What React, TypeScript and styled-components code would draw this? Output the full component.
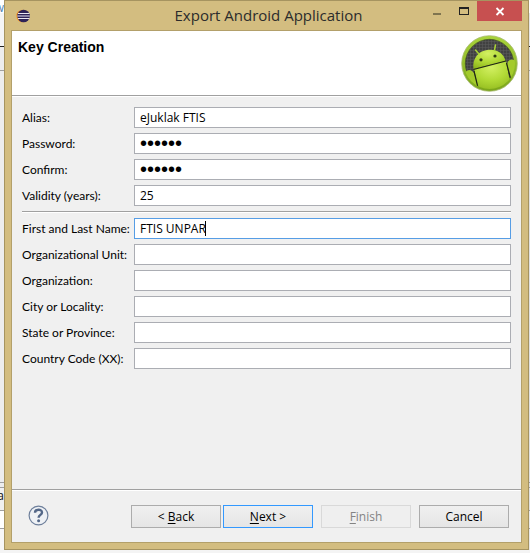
import React, { useState } from "react";
import styled, { createGlobalStyle } from "styled-components";

const Global = createGlobalStyle`
  *, *::before, *::after { box-sizing: border-box; }
  html, body, #root { height: 100%; }
  body { margin: 0; overflow: hidden; background: #ededed; font: 12px/16px "Open Sans", "Noto Sans", sans-serif; color: #000; }
  button, input { font: inherit; color: inherit; }
`;

const Desktop = styled.div`
  display: grid;
  grid-template-columns: 4px minmax(0, 1fr) 1px;
  grid-template-rows: minmax(0, 1fr) 3px;
  height: 100%;
`;

const Backdrop = styled.div`
  display: flex;
  flex-direction: column;
  overflow: hidden;
  background: #e9e9e9;
`;

const Strip = styled.div<{ $h?: number; $bg: string; $line?: string }>`
  flex: ${(p) => (p.$h ? `0 0 ${p.$h}px` : "1 1 0")};
  overflow: hidden;
  background: ${(p) => p.$bg};
  border-bottom: 1px solid ${(p) => p.$line ?? p.$bg};
`;

const Clipped = styled.span<{ $color: string }>`
  display: flex;
  justify-content: flex-end;
  color: ${(p) => p.$color};
`;

const BottomEdge = styled.div`
  grid-column: 1 / -1;
  background: #f4f4f4;
`;

const Frame = styled.section`
  display: flex;
  flex-direction: column;
  padding: 0 6px 6px;
  background: #d3bd80;
  border: 1px solid #a69460;
`;

const TitleBar = styled.header`
  display: grid;
  grid-template-columns: 112px 1fr 108px;
  flex: 0 0 29px;
  align-items: center;
`;

const AppIcon = styled.svg`
  margin-left: 5px;
  width: 14px;
  height: 14px;
`;

const Title = styled.h1`
  margin: 0;
  font-size: 15px;
  line-height: 29px;
  font-weight: 400;
  text-align: center;
  white-space: nowrap;
  color: #2c2c2c;
`;

const WindowControls = styled.div`
  display: flex;
  align-self: start;
  justify-content: flex-end;
`;

const ControlButton = styled.button<{ $close?: boolean }>`
  display: block;
  width: ${(p) => (p.$close ? 45 : 27)}px;
  height: 20px;
  padding: 0;
  border: 0;
  background: ${(p) => (p.$close ? "#c75050" : "transparent")};
  svg { display: block; width: 100%; height: 20px; }
`;

const Client = styled.form`
  display: flex;
  flex: 1;
  flex-direction: column;
  min-height: 0;
  background: #f0f0f0;
  border: 1px solid #b3a06a;
`;

const Banner = styled.div`
  display: flex;
  flex: 0 0 65px;
  justify-content: space-between;
  padding: 4px 3px 0 6px;
  background: #fff;
  border-bottom: 1px solid #a0a0a0;
`;

const Heading = styled.h2`
  margin: 4px 0 0;
  font: 700 14px/16px "Liberation Sans", Arial, sans-serif;
`;

const AndroidLogo = styled.svg`
  width: 57px;
  height: 57px;
`;

const Fields = styled.div`
  flex: 1;
  padding: 10px 10px 0;
  border-top: 1px solid #fff;
`;

const Group = styled.div`
  display: grid;
  grid-template-columns: 112px minmax(0, 1fr);
  row-gap: 5px;
  align-items: center;
`;

const Divider = styled.hr`
  height: 2px;
  margin: 5px 0;
  border: 0;
  border-top: 1px solid #a0a0a0;
  background: #fff;
`;

const Label = styled.label`
  font-family: Lato, "Open Sans", sans-serif;
  white-space: nowrap;
`;

const FieldBox = styled.div`
  position: relative;
`;

const TextField = styled.input`
  display: block;
  width: 100%;
  height: 21px;
  padding: 0 5px;
  border: 1px solid #abadb3;
  border-radius: 0;
  background: #fff;
  outline: none;
  caret-color: transparent;
  &:focus { border-color: #569de5; }
  &[type="password"] { font-family: "Liberation Sans", Arial, sans-serif; font-size: 20px; }
`;

const Caret = styled.div`
  position: absolute;
  top: 3px;
  left: 6px;
  height: 15px;
  border-right: 1px solid #000;
  pointer-events: none;
`;

const Footer = styled.footer`
  display: flex;
  flex: 0 0 53px;
  align-items: flex-start;
  padding: 15px 12px 0 16px;
  border-top: 1px solid #a0a0a0;
  box-shadow: inset 0 1px #fff;
`;

const HelpButton = styled.button`
  width: 21px;
  height: 21px;
  margin-right: auto;
  padding: 0;
  border: 0;
  background: none;
  svg { display: block; }
`;

const Pair = styled.div`
  display: flex;
  gap: 2px;
`;

const Actions = styled.div`
  display: flex;
  gap: 8px;
`;

const PushButton = styled.button<{ $primary?: boolean }>`
  width: 90px;
  height: 23px;
  padding: 0;
  border: 1px solid ${(p) => (p.$primary ? "#3399ff" : "#acacac")};
  background: linear-gradient(#f0f0f0, #e5e5e5);
  line-height: 20px;
  u { text-underline-offset: 2px; }
  &:disabled { border-color: #d9d9d9; background: #efefef; color: #838383; }
`;

type Field = { id: string; label: string; value?: string; type?: string; focus?: boolean };

const keyFields: Field[] = [
  { id: "alias", label: "Alias:", value: "eJuklak FTIS" },
  { id: "password", label: "Password:", value: "secret", type: "password" },
  { id: "confirm", label: "Confirm:", value: "secret", type: "password" },
  { id: "validity", label: "Validity (years):", value: "25" },
];

const ownerFields: Field[] = [
  { id: "name", label: "First and Last Name:", value: "FTIS UNPAR", focus: true },
  { id: "unit", label: "Organizational Unit:" },
  { id: "organization", label: "Organization:" },
  { id: "city", label: "City or Locality:" },
  { id: "state", label: "State or Province:" },
  { id: "country", label: "Country Code (XX):" },
];

function textWidth(text: string) {
  const ctx = document.createElement("canvas").getContext("2d");
  if (!ctx) return 0;
  ctx.font = '12px "Open Sans", "Noto Sans", sans-serif';
  return Math.round(ctx.measureText(text).width);
}

function FieldRow({ id, label, value = "", type = "text", focus }: Field) {
  const [text, setText] = useState(value);
  return (
    <>
      <Label htmlFor={id}>{label}</Label>
      <FieldBox>
        <TextField id={id} type={type} value={text} autoFocus={focus} autoComplete="off" spellCheck={false} onChange={(e) => setText(e.target.value)} />
        {focus && <Caret aria-hidden="true" style={{ width: textWidth(text) }} />}
      </FieldBox>
    </>
  );
}

function EclipseIcon() {
  return (
    <AppIcon viewBox="0 0 14 14" aria-hidden="true">
      <circle cx="6.5" cy="7" r="6.3" fill="#f39a2d" />
      <circle cx="7.6" cy="7" r="6.3" fill="#2e2358" />
      <path d="M2 4.500h11.5M1.3 7h12.500M2 9.500h11.5" stroke="#e8e6f2" strokeWidth="1" />
    </AppIcon>
  );
}

function Android() {
  return (
    <AndroidLogo viewBox="0 0 57 57" role="img" aria-label="Android">
      <defs>
        <linearGradient id="ring" x1="0" y1="0" x2="0" y2="1">
          <stop offset="0" stopColor="#a9d43b" />
          <stop offset="1" stopColor="#7ba51a" />
        </linearGradient>
        <radialGradient id="body" cx=".45" cy=".2" r=".85">
          <stop offset="0" stopColor="#d3f063" />
          <stop offset=".5" stopColor="#b2da36" />
          <stop offset="1" stopColor="#8cb41b" />
        </radialGradient>
        <pattern id="mesh" width="3" height="3" patternUnits="userSpaceOnUse">
          <rect width="3" height="3" fill="#414141" />
          <path d="M0 0h3M0 0v3" stroke="#5c5c5c" strokeWidth="1" />
        </pattern>
        <clipPath id="disc"><circle cx="28.5" cy="28.5" r="25.500" /></clipPath>
      </defs>
      <circle cx="28.5" cy="28.5" r="27.800" fill="url(#ring)" stroke="#a9ba75" strokeWidth=".8" />
      <circle cx="28.5" cy="28.5" r="24.2" fill="url(#mesh)" stroke="#3d4b1d" strokeWidth=".6" />
      <g clipPath="url(#disc)">
        <path d="M13 34L45 26L51 57H18Z" fill="url(#body)" />
        <path d="M3 39Q7 33 11 36L13 38L19 57H3Z" fill="#a4cb2c" />
        <path d="M46 29Q48 23 53 25L57 30V53H52Z" fill="#a4cb2c" />
        <path d="M12.5 34C11 23 18 16 26 15C35 13.500 43 18 44.500 26Z" fill="url(#body)" />
        <path d="M12.500 34.500L45 26M13 36L18 57M45.500 28L51 49" fill="none" stroke="#202713" strokeWidth="1.2" />
      </g>
      <path d="M14.500 15L18 19M34.500 10L33.500 15" stroke="#a9d335" strokeWidth="1.5" strokeLinecap="round" />
      <circle cx="20" cy="24.800" r="1.6" fill="#303b14" />
      <circle cx="34" cy="21" r="1.6" fill="#303b14" />
    </AndroidLogo>
  );
}

export default function App() {
  return (
    <Desktop>
      <Global />
      <Backdrop aria-hidden="true">
        <Strip $h={13} $bg="#fff"><Clipped $color="#5585b5">w</Clipped></Strip>
        <Strip $h={34} $bg="#f5f5f5" $line="#222" />
        <Strip $h={24} $bg="#ededed" $line="#a0a0a0" />
        <Strip $bg="#ededed" $line="#a0a0a0" />
        <Strip $h={5} $bg="#ededed" $line="#a0a0a0" />
        <Strip $h={23} $bg="#f0f0f0" $line="#a0a0a0"><Clipped $color="#111">a</Clipped></Strip>
        <Strip $h={18} $bg="#fff" $line="#a0a0a0" />
        <Strip $h={21} $bg="#f7f7f7" />
      </Backdrop>
      <Frame aria-label="Export Android Application">
        <TitleBar>
          <EclipseIcon />
          <Title>Export Android Application</Title>
          <WindowControls>
            <ControlButton type="button" aria-label="Minimize">
              <svg viewBox="0 0 27 20"><path d="M10 12h8v2h-8z" fill="#7f744f" /></svg>
            </ControlButton>
            <ControlButton type="button" aria-label="Maximize">
              <svg viewBox="0 0 27 20"><path d="M9 6h10v8H9zM10 8v5h8V8z" fill="#222" fillRule="evenodd" /></svg>
            </ControlButton>
            <ControlButton type="button" $close aria-label="Close">
              <svg viewBox="0 0 45 20"><path d="M19.500 7L26.500 14M26.500 7L19.500 14" stroke="#fff" strokeWidth="1.8" /></svg>
            </ControlButton>
          </WindowControls>
        </TitleBar>
        <Client onSubmit={(e) => e.preventDefault()}>
          <Banner>
            <Heading>Key Creation</Heading>
            <Android />
          </Banner>
          <Fields>
            <Group>{keyFields.map((f) => <FieldRow key={f.id} {...f} />)}</Group>
            <Divider />
            <Group>{ownerFields.map((f) => <FieldRow key={f.id} {...f} />)}</Group>
          </Fields>
          <Footer>
            <HelpButton type="button" aria-label="Help">
              <svg width="21" height="21" viewBox="0 0 21 21">
                <circle cx="10.500" cy="10.500" r="9.400" fill="#eef1f5" stroke="#6e7f9b" strokeWidth="1.2" />
                <path d="M7 7.700C7.100 3.800 14 3.800 14 7.400C14 9.800 10.600 9.900 10.600 12.700" fill="none" stroke="#536788" strokeWidth="2.4" />
                <circle cx="10.600" cy="15.800" r="1.500" fill="#536788" />
              </svg>
            </HelpButton>
            <Actions>
              <Pair>
                <PushButton type="button">&lt; <u>B</u>ack</PushButton>
                <PushButton type="submit" $primary><u>N</u>ext &gt;</PushButton>
              </Pair>
              <PushButton type="button" disabled><u>F</u>inish</PushButton>
              <PushButton type="button">Cancel</PushButton>
            </Actions>
          </Footer>
        </Client>
      </Frame>
      <Backdrop aria-hidden="true">
        <Strip $h={13} $bg="#fff" />
        <Strip $h={34} $bg="#e5e5e5" $line="#222" />
        <Strip $h={24} $bg="#e0e0e0" $line="#a0a0a0" />
        <Strip $bg="#e0e0e0" $line="#a0a0a0" />
        <Strip $h={5} $bg="#e0e0e0" $line="#a0a0a0" />
        <Strip $h={23} $bg="#e0e0e0" $line="#a0a0a0" />
        <Strip $h={18} $bg="#e8e8e8" $line="#a0a0a0" />
        <Strip $h={21} $bg="#e8e8e8" />
      </Backdrop>
      <BottomEdge />
    </Desktop>
  );
}
